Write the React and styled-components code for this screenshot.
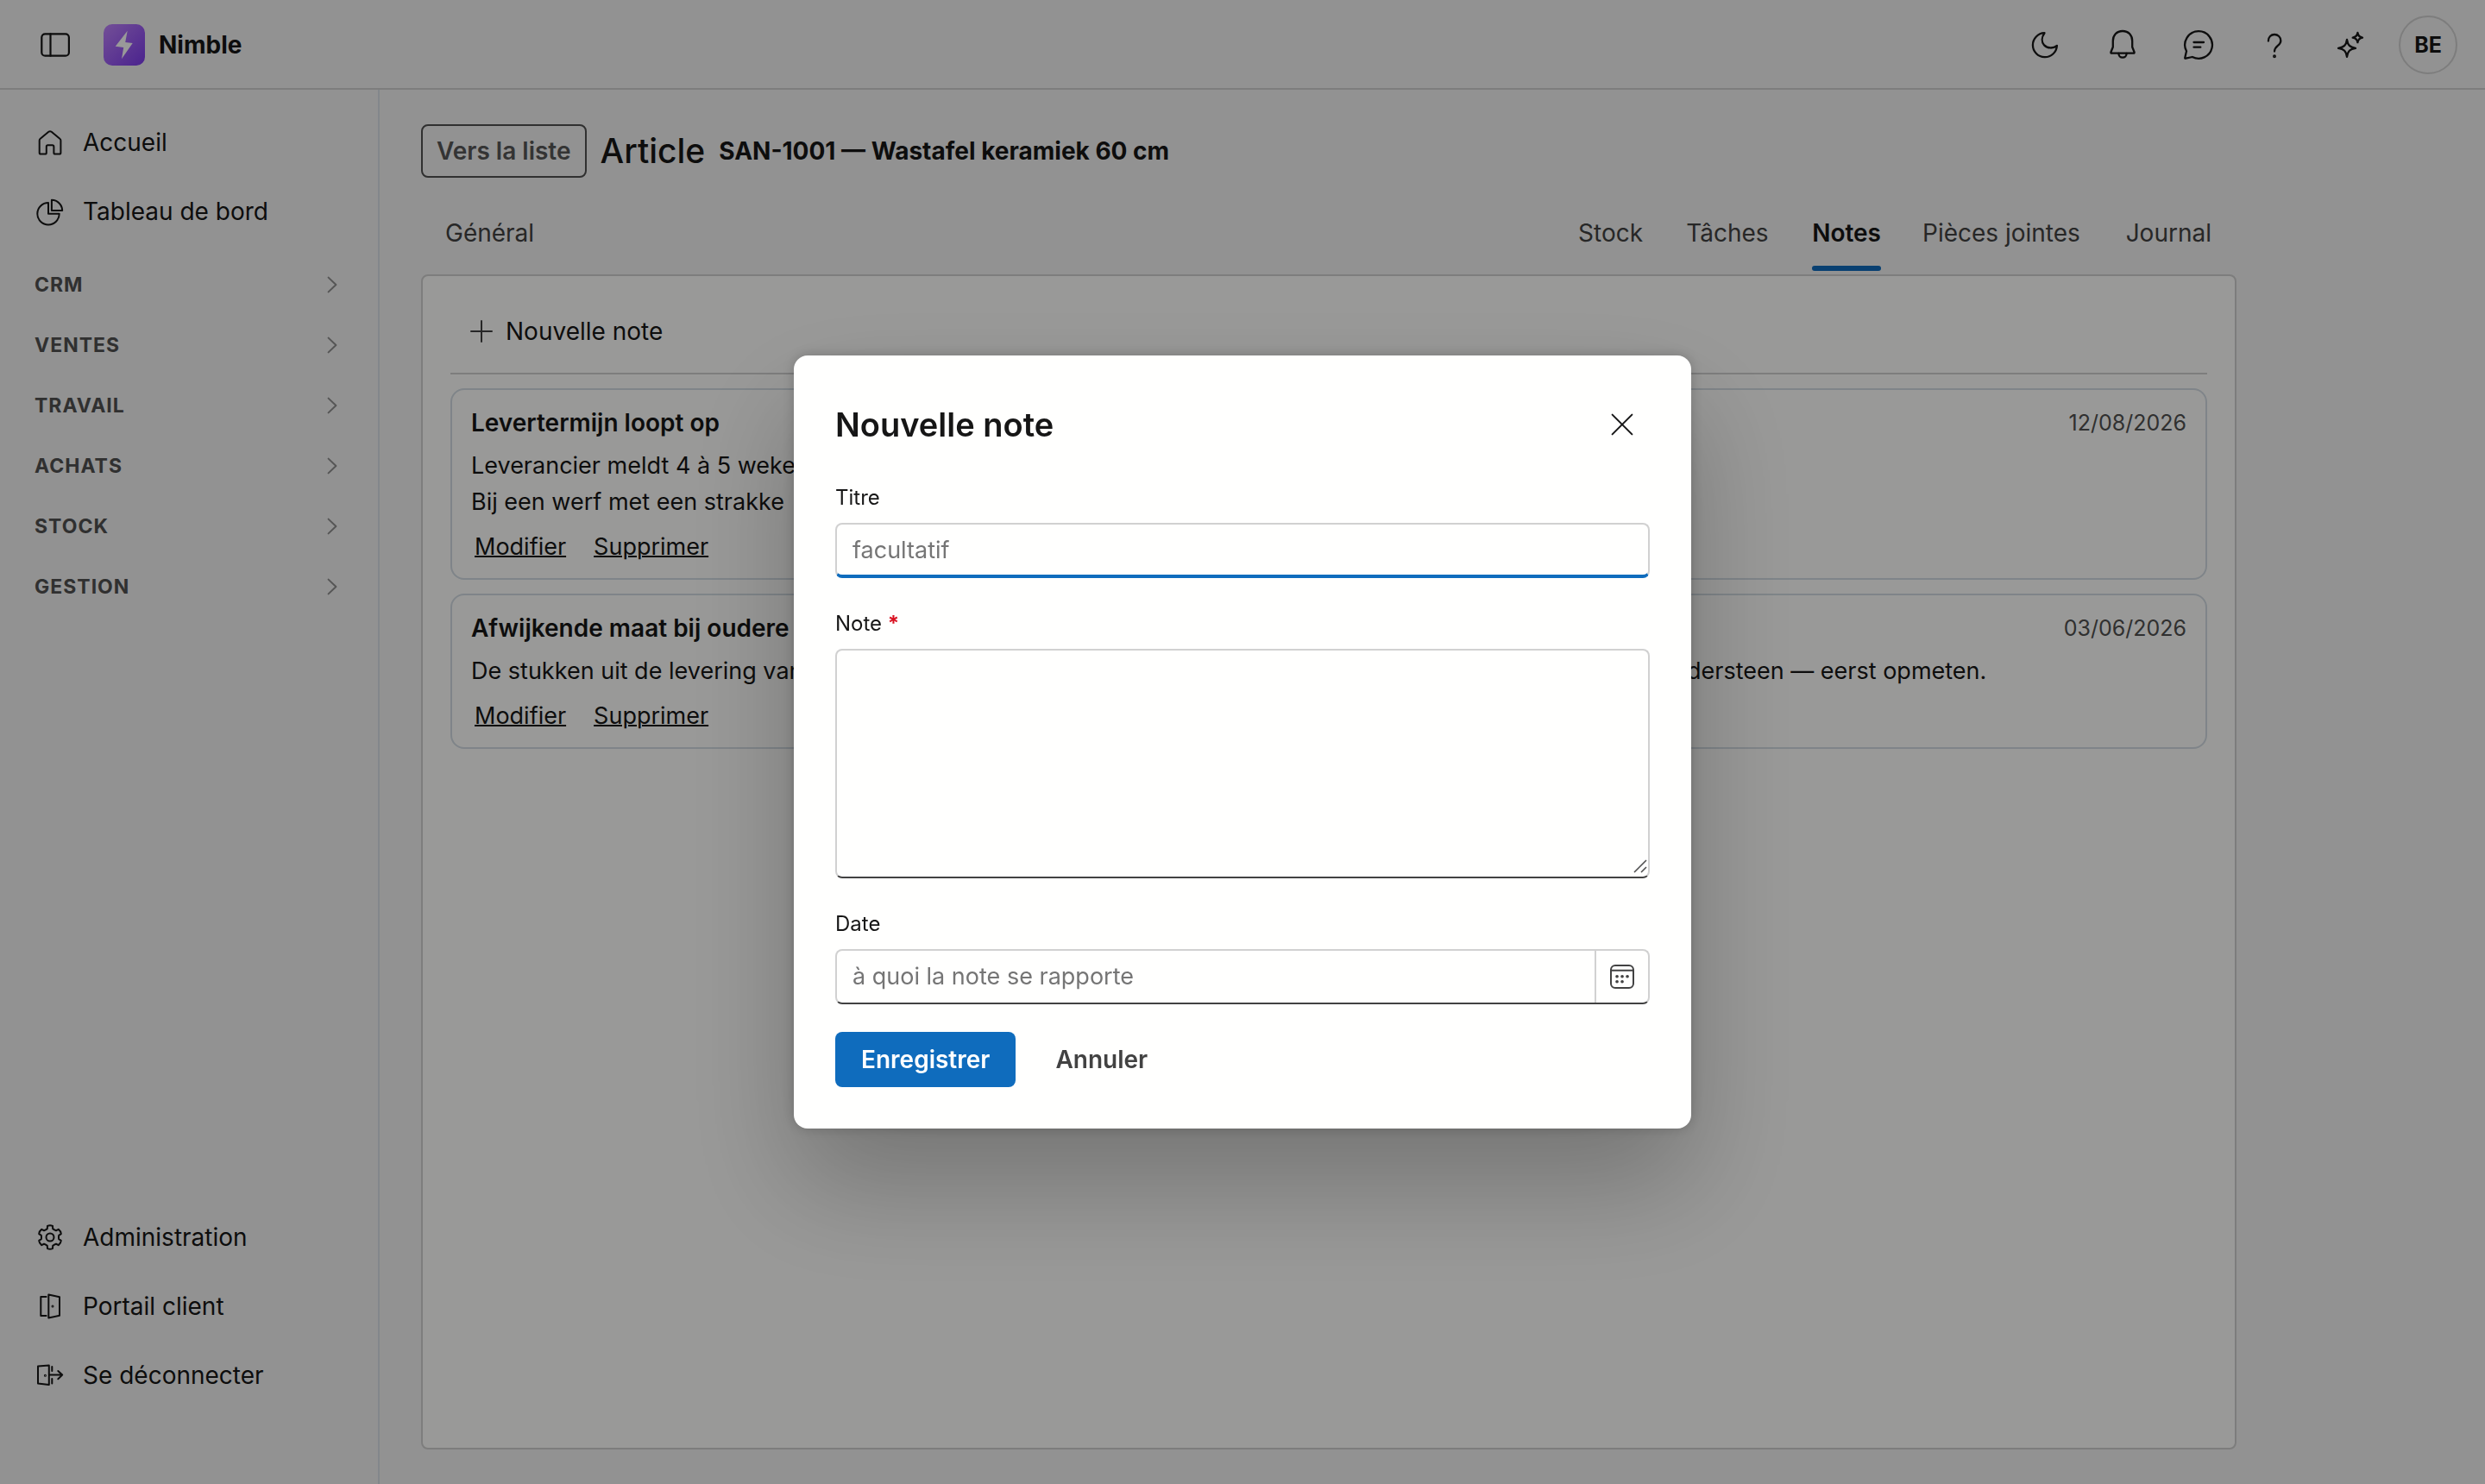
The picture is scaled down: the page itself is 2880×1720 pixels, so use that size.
import React from 'react';
import styled, { createGlobalStyle } from 'styled-components';

const COLOR = {
  PAGE: '#f3f3f3',
  SURFACE: '#fffffd',
  DIALOG: '#fffffe',
  TEXT: '#161616',
  TEXT_SOFT: '#424242',
  TEXT_MUTED: '#505050',
  TEXT_BACK: '#575757',
  PLACEHOLDER: '#757575',
  LINE: '#d1d1d1',
  CARD_LINE: '#d4dde4',
  SIDE_LINE: '#dbe2e8',
  CHEVRON: '#8f8f8f',
  PRIMARY: '#0f6cbd',
  DANGER: '#d9101f',
};

const GlobalStyle = createGlobalStyle`
  * {
    box-sizing: border-box;
  }

  body {
    margin: 0;
    background: ${COLOR.PAGE};
    color: ${COLOR.TEXT};
    font-family: Inter, 'Liberation Sans', sans-serif;
    font-size: 28px;
    line-height: 40px;
  }

  button, input, textarea {
    font: inherit;
    color: inherit;
  }

  h1, h2, h3, p {
    margin: 0;
  }
`;

/* One gear outline, six flat teeth around the middle of a 40 unit box. */
const gearPath = () => {
  const point = (deg, r) => {
    const a = (deg * Math.PI) / 180;
    return `${(20 + r * Math.cos(a)).toFixed(2)} ${(20 + r * Math.sin(a)).toFixed(2)}`;
  };
  const parts = [];
  for (let i = 0; i < 6; i += 1) {
    const t = 90 + i * 60;
    parts.push(
      `${i ? 'Q' + point(t - 30, 9.8) : 'M'} ${point(t - 18, 10.4)}`,
      `L${point(t - 13, 13.4)} Q${point(t, 14.4)} ${point(t + 13, 13.4)}`,
      `L${point(t + 18, 10.4)}`
    );
  }
  return `${parts.join(' ')} Q${point(60, 9.8)} ${point(72, 10.4)} Z`;
};

const icons = {
  PANEL: (
    <>
      <rect x="4.3" y="7.3" width="31.6" height="25.4" rx="4" />
      <path d="M14.5 7.3V32.7" />
    </>
  ),
  MOON: (
    <path d="M17.5 6.2A14 14 0 1 0 31.9 21C27.5 24.4 21 24.4 17.2 20.4 13.8 16.6 14 11 17.5 6.2Z" />
  ),
  BELL: (
    <>
      <path d="M20 4C13 4 8.8 9 8.8 15.5V22.5L6.5 28.2Q6 29.7 7.4 29.7H32.6Q34 29.7 33.5 28.2L31.2 22.5V15.5C31.2 9 27 4 20 4Z" />
      <path d="M15.4 30A4.6 4.7 0 0 0 24.6 30" />
    </>
  ),
  CHAT: (
    <>
      <path d="M20 4.2A15.8 15.8 0 1 1 12.8 34L5.3 35.7Q4 36 4.3 34.7L6 27.3A15.8 15.8 0 0 1 20 4.2Z" />
      <path d="M14.5 17H26M14.5 22.7H22.3" />
    </>
  ),
  HELP: (
    <>
      <path d="M12.9 15.5C12.9 11 16 8 20 8S27.3 11 27.3 15.2C27.3 21 20 20.8 20 27.6" />
      <circle cx="20" cy="33.3" r="0.8" />
    </>
  ),
  SPARKLE: (
    <>
      <path d="M16 13.8C17 20.5 19.3 22.6 26 23.8 19.3 25 17 27.2 16 33.9 15 27.2 12.7 25 6 23.8 12.7 22.6 15 20.5 16 13.8Z" />
      <path d="M28.4 6C29 9.7 30.4 11 34 11.6 30.4 12.2 29 13.5 28.4 17.2 27.8 13.5 26.4 12.2 22.7 11.6 26.4 11 27.8 9.7 28.4 6Z" />
    </>
  ),
  HOME: (
    <path d="M7.7 17.8Q7.7 16.5 8.7 15.7L18.3 7.8Q20 6.6 21.7 7.8L31.3 15.7Q32.4 16.5 32.4 17.8V32Q32.4 33.6 30.8 33.6H26Q24.4 33.6 24.4 32V25Q24.4 23.3 22.7 23.3H17.4Q15.8 23.3 15.8 25V32Q15.8 33.6 14.2 33.6H9.3Q7.7 33.6 7.7 32Z" />
  ),
  PIE: (
    <>
      <path d="M18 10A12.7 12.7 0 1 0 30.7 22.7H18Z" />
      <path d="M21.9 6.8A12.4 12.4 0 0 1 34.2 19.1H21.9Z" />
    </>
  ),
  GEAR: (
    <>
      <path d={gearPath()} />
      <circle cx="20" cy="20" r="4.5" />
    </>
  ),
  DOOR: (
    <>
      <path d="M15.6 9H9.3V31H15.6" />
      <path d="M18.3 6.4L31 9.2V30.8L18.3 33.6Z" />
      <circle cx="23" cy="20" r="0.5" />
    </>
  ),
  EXIT: (
    <>
      <path d="M6 9.6L18.8 8.5V31L6 29.4Z" />
      <circle cx="14.4" cy="20.3" r="0.5" />
      <path d="M22.3 10V15M22.3 24V29.4M19 19.6H34.2M29.3 15L34.2 19.6 29.3 24.3" />
    </>
  ),
  CHEVRON: <path d="M15.6 11.6L24.4 20 15.6 28.4" />,
  PLUS: <path d="M20 8V32M8 20H32" />,
  CLOSE: <path d="M8.6 8.6L31.4 31.4M31.4 8.6L8.6 31.4" />,
  CALENDAR: (
    <>
      <rect x="7" y="7" width="26" height="26" rx="5" />
      <path d="M7 12.8H33" />
      <path d="M14 19.8h.1M20 19.8h.1M26 19.8h.1M14 25.8h.1M20 25.8h.1" strokeWidth="3.6" />
    </>
  ),
};

const Icon = ({ icon, weight = 2, color = 'currentColor' }) => (
  <Svg viewBox="0 0 40 40" stroke={color} strokeWidth={weight} aria-hidden="true">
    {icon}
  </Svg>
);

const mainLinks = [
  { label: 'Accueil', icon: icons.HOME },
  { label: 'Tableau de bord', icon: icons.PIE },
];
const sections = ['CRM', 'Ventes', 'Travail', 'Achats', 'Stock', 'Gestion'];
const footLinks = [
  { label: 'Administration', icon: icons.GEAR },
  { label: 'Portail client', icon: icons.DOOR },
  { label: 'Se déconnecter', icon: icons.EXIT },
];
const actions = [
  { label: 'Mode sombre', icon: icons.MOON },
  { label: 'Notifications', icon: icons.BELL },
  { label: 'Messages', icon: icons.CHAT },
  { label: 'Aide', icon: icons.HELP },
  { label: 'Assistant', icon: icons.SPARKLE },
];
const tabs = ['Stock', 'Tâches', 'Notes', 'Pièces jointes', 'Journal'];
const notes = [
  {
    title: 'Levertermijn loopt op',
    date: '12/08/2026',
    lines: ['Leverancier meldt 4 à 5 weken.', 'Bij een werf met een strakke'],
  },
  {
    title: 'Afwijkende maat bij oudere',
    date: '03/06/2026',
    lines: [
      'De stukken uit de levering van april zijn 4 mm smaller en passen niet zonder aanpassingen op de standaard ondersteen — eerst opmeten.',
    ],
  },
];

const App = () => (
  <Shell>
    <GlobalStyle />
    <TopBar>
      <BarButton type="button" aria-label="Menu">
        <Icon icon={icons.PANEL} weight={2.2} />
      </BarButton>
      <Logo>
        <svg viewBox="0 0 48 48" width="48" height="48" aria-hidden="true">
          <path
            d="M27.7 7.7L25.2 21 33.7 22 21 40.3 23.2 27 13.7 25.8Z"
            fill="#fff"
          />
        </svg>
      </Logo>
      <Brand>Nimble</Brand>
      <Actions>
        {actions.map(({ label, icon }) => (
          <BarButton type="button" aria-label={label} key={label}>
            <Icon icon={icon} weight={2.3} />
          </BarButton>
        ))}
      </Actions>
      <Avatar type="button">BE</Avatar>
    </TopBar>

    <Body>
      <Sidebar>
        <NavGroup>
          {mainLinks.map(({ label, icon }) => (
            <NavLink href="#" key={label}>
              <Icon icon={icon} />
              {label}
            </NavLink>
          ))}
        </NavGroup>
        <SectionGroup>
          {sections.map(label => (
            <SectionButton type="button" key={label}>
              {label}
              <Icon icon={icons.CHEVRON} color={COLOR.CHEVRON} />
            </SectionButton>
          ))}
        </SectionGroup>
        <NavGroup>
          {footLinks.map(({ label, icon }) => (
            <NavLink href="#" key={label}>
              <Icon icon={icon} />
              {label}
            </NavLink>
          ))}
        </NavGroup>
      </Sidebar>

      <Main>
        <Heading>
          <BackLink href="#">Vers la liste</BackLink>
          <PageTitle>Article</PageTitle>
          <Subject>SAN-1001 — Wastafel keramiek 60 cm</Subject>
        </Heading>
        <TabList role="tablist">
          <Tab type="button" role="tab" data-label="Général" $first>
            Général
          </Tab>
          {tabs.map(label => (
            <Tab
              type="button"
              role="tab"
              key={label}
              data-label={label}
              $active={label === 'Notes'}
              aria-selected={label === 'Notes'}
            >
              {label}
            </Tab>
          ))}
        </TabList>
        <Panel>
          <Toolbar>
            <AddButton type="button">
              <Icon icon={icons.PLUS} color={COLOR.TEXT_SOFT} />
              Nouvelle note
            </AddButton>
          </Toolbar>
          <NoteList>
            {notes.map(({ title, date, lines }) => (
              <NoteCard key={title}>
                <NoteHead>
                  <h3>{title}</h3>
                  <time>{date}</time>
                </NoteHead>
                {lines.map(line => (
                  <NoteText key={line}>{line}</NoteText>
                ))}
                <NoteLinks>
                  <a href="#">Modifier</a>
                  <a href="#">Supprimer</a>
                </NoteLinks>
              </NoteCard>
            ))}
          </NoteList>
        </Panel>
      </Main>
    </Body>

    <Backdrop>
      <Dialog role="dialog" aria-modal="true" aria-labelledby="dialog-title">
        <DialogHead>
          <h2 id="dialog-title">Nouvelle note</h2>
          <CloseButton type="button" aria-label="Fermer">
            <Icon icon={icons.CLOSE} />
          </CloseButton>
        </DialogHead>
        <Field>
          <label htmlFor="titre">Titre</label>
          <TextInput id="titre" type="text" placeholder="facultatif" $active />
        </Field>
        <Field>
          <label htmlFor="note">
            Note <Required>*</Required>
          </label>
          <AreaWrap>
            <TextArea id="note" required />
            <Grip viewBox="0 0 16 16" aria-hidden="true">
              <path d="M1 15L15 1M9 15L15 9" />
            </Grip>
          </AreaWrap>
        </Field>
        <Field>
          <label htmlFor="date">Date</label>
          <DateBox>
            <input id="date" type="text" placeholder="à quoi la note se rapporte" />
            <button type="button" aria-label="Choisir une date">
              <Icon icon={icons.CALENDAR} />
            </button>
          </DateBox>
        </Field>
        <DialogActions>
          <DialogButton type="button" $primary>
            Enregistrer
          </DialogButton>
          <DialogButton type="button">Annuler</DialogButton>
        </DialogActions>
      </Dialog>
    </Backdrop>
  </Shell>
);

const Svg = styled.svg`
  width: 40px;
  height: 40px;
  flex: none;
  fill: none;
  stroke-linecap: round;
  stroke-linejoin: round;
`;

const Shell = styled.div`
  display: flex;
  flex-direction: column;
  min-height: 100vh;
`;

const TopBar = styled.header`
  display: flex;
  align-items: center;
  height: 104px;
  padding: 2px 32px 0 40px;
  border-bottom: 2px solid ${COLOR.LINE};
`;

const BarButton = styled.button`
  display: grid;
  place-items: center;
  width: 48px;
  height: 64px;
  padding: 0;
  border: 0;
  background: none;
`;

const Logo = styled.span`
  display: flex;
  margin: 0 16px 0 32px;
  border-radius: 10px;
  background: linear-gradient(135deg, #c084fc, #7c3aed);
`;

const Brand = styled.span`
  font-weight: 700;
`;

const Actions = styled.div`
  display: flex;
  gap: 40px;
  margin: 0 32px 0 auto;
`;

const Avatar = styled.button`
  width: 68px;
  height: 68px;
  padding: 0;
  border: 2px solid ${COLOR.LINE};
  border-radius: 50%;
  background: none;
  font-size: 25px;
  font-weight: 700;
`;

const Body = styled.div`
  flex: 1;
  display: flex;
`;

const Sidebar = styled.aside`
  display: flex;
  flex-direction: column;
  flex: none;
  width: 440px;
  padding: 21px 0 86px;
  border-right: 2px solid ${COLOR.SIDE_LINE};
`;

const NavGroup = styled.nav`
  display: flex;
  flex-direction: column;
`;

const NavLink = styled.a`
  display: flex;
  align-items: center;
  gap: 18px;
  height: 80px;
  padding: 0 38px;
  color: inherit;
  text-decoration: none;
`;

const SectionGroup = styled.div`
  display: flex;
  flex-direction: column;
  flex: 1;
  padding-top: 10px;
`;

const SectionButton = styled.button`
  display: flex;
  align-items: center;
  justify-content: space-between;
  height: 70px;
  padding: 0 33px 0 40px;
  border: 0;
  background: none;
  color: ${COLOR.TEXT_MUTED};
  font-size: 23px;
  font-weight: 700;
  letter-spacing: 1px;
  text-transform: uppercase;
`;

const Main = styled.main`
  flex: 1;
  display: flex;
  flex-direction: column;
  max-width: 2200px;
  padding: 40px 48px;
`;

const Heading = styled.div`
  display: flex;
  align-items: center;
  gap: 16px;
`;

const BackLink = styled.a`
  padding: 9px 16px;
  border: 2px solid ${COLOR.TEXT_MUTED};
  border-radius: 8px;
  color: ${COLOR.TEXT_BACK};
  font-weight: 600;
  text-decoration: none;
`;

const PageTitle = styled.h1`
  font-size: 39px;
  font-weight: 500;
`;

const Subject = styled.span`
  font-weight: 700;
`;

const TabList = styled.div`
  display: flex;
  height: 112px;
  padding: 20px 2px 0 4px;
`;

/* The hidden bold copy keeps a tab as wide as it gets when it is selected. */
const Tab = styled.button`
  display: flex;
  flex-direction: column;
  align-items: flex-start;
  height: 88px;
  margin-right: ${props => (props.$first ? 'auto' : '0')};
  padding: 24px 24px 0;
  border: 0;
  background: none;
  color: ${props => (props.$active ? COLOR.TEXT : COLOR.TEXT_SOFT)};
  font-weight: ${props => (props.$active ? 600 : 400)};

  &::after {
    content: attr(data-label);
    width: 100%;
    height: 6px;
    margin-top: 18px;
    overflow: hidden;
    border-radius: 3px;
    background: ${props => (props.$active ? COLOR.PRIMARY : 'transparent')};
    color: transparent;
    font-weight: 600;
  }
`;

const Panel = styled.section`
  flex: 1;
  padding: 20px 32px;
  border: 2px solid ${COLOR.LINE};
  border-radius: 8px;
  background: ${COLOR.SURFACE};
`;

const Toolbar = styled.div`
  display: flex;
  padding: 12px 16px 16px;
  border-bottom: 2px solid ${COLOR.LINE};
`;

const AddButton = styled.button`
  display: flex;
  align-items: center;
  gap: 8px;
  height: 64px;
  padding: 0;
  border: 0;
  background: none;
`;

const NoteList = styled.div`
  display: flex;
  flex-direction: column;
  gap: 16px;
  padding-top: 16px;
`;

const NoteCard = styled.article`
  padding: 18px 22px 16px;
  border: 2px solid ${COLOR.CARD_LINE};
  border-radius: 16px;
`;

const NoteHead = styled.div`
  display: flex;
  justify-content: space-between;
  margin-bottom: 9px;

  h3 {
    font-size: 28px;
    font-weight: 600;
  }

  time {
    color: ${COLOR.TEXT_MUTED};
    font-size: 25px;
  }
`;

const NoteText = styled.p`
  font-size: 27px;
  line-height: 42px;
`;

const NoteLinks = styled.div`
  display: flex;
  gap: 32px;
  padding: 11px 4px 0;
  font-size: 27px;

  a {
    color: inherit;
    text-decoration: underline;
    text-decoration-thickness: 2px;
  }
`;

const Backdrop = styled.div`
  position: fixed;
  inset: 0;
  display: grid;
  place-items: center;
  background: rgba(0, 0, 0, 0.4);
`;

const Dialog = styled.div`
  display: flex;
  flex-direction: column;
  width: 1040px;
  padding: 48px;
  border-radius: 16px;
  background: ${COLOR.DIALOG};
  box-shadow: 0 0 16px rgba(0, 0, 0, 0.2), 0 64px 128px rgba(0, 0, 0, 0.24);
`;

const DialogHead = styled.div`
  display: flex;
  align-items: center;
  justify-content: space-between;
  margin-bottom: 36px;

  h2 {
    font-size: 38px;
    font-weight: 600;
    line-height: 64px;
  }
`;

const CloseButton = styled.button`
  display: grid;
  place-items: center;
  width: 64px;
  height: 64px;
  padding: 0;
  border: 0;
  background: none;
`;

const Field = styled.div`
  display: flex;
  flex-direction: column;
  gap: 12px;
  margin-bottom: 36px;

  label {
    font-size: 24px;
    line-height: 34px;
  }

  input {
    font-size: 27px;
  }

  ::placeholder {
    color: ${COLOR.PLACEHOLDER};
    opacity: 1;
  }
`;

const Required = styled.span`
  color: ${COLOR.DANGER};
  font-weight: 700;
`;

const box = `
  border: 2px solid ${COLOR.LINE};
  border-bottom-color: ${COLOR.TEXT_SOFT};
  border-radius: 8px;
  background: none;
  outline: none;
`;

const TextInput = styled.input`
  ${box}
  height: 64px;
  padding: 0 18px;
  border-bottom: ${props => (props.$active ? `4px solid ${COLOR.PRIMARY}` : '')};
`;

const AreaWrap = styled.div`
  position: relative;
  display: flex;
`;

const TextArea = styled.textarea`
  ${box}
  width: 100%;
  height: 266px;
  padding: 12px 18px;
  resize: none;
`;

const Grip = styled.svg`
  position: absolute;
  right: 3px;
  bottom: 6px;
  width: 16px;
  height: 16px;
  stroke: ${COLOR.TEXT_MUTED};
  stroke-width: 1.6;
`;

const DateBox = styled.div`
  ${box}
  display: flex;
  height: 64px;

  input {
    flex: 1;
    min-width: 0;
    padding: 0 18px;
    border: 0;
    background: none;
    outline: none;
  }

  button {
    display: grid;
    place-items: center;
    width: 62px;
    padding: 0;
    border: 0;
    border-left: 2px solid ${COLOR.LINE};
    background: none;
    color: ${COLOR.TEXT_SOFT};
  }
`;

const DialogActions = styled.div`
  display: flex;
  gap: 16px;
  margin-top: -4px;
`;

const DialogButton = styled.button`
  height: 64px;
  padding: 0 30px;
  border: 0;
  border-radius: 8px;
  background: ${props => (props.$primary ? COLOR.PRIMARY : 'none')};
  color: ${props => (props.$primary ? '#fff' : COLOR.TEXT_SOFT)};
  font-weight: 600;
`;

export default App;
